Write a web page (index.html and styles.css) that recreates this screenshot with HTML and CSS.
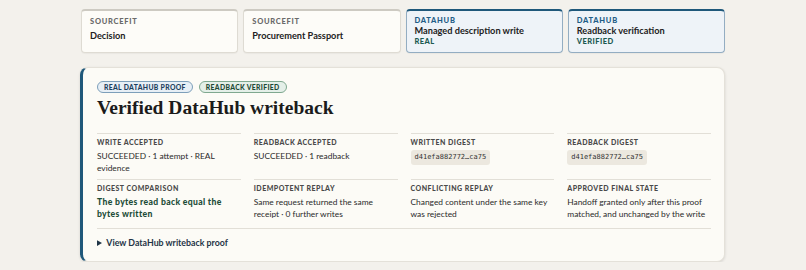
FILE: index.html
```html
<!DOCTYPE html>
<html lang="en">
<head>
    <meta charset="UTF-8">
    <meta name="viewport" content="width=device-width, initial-scale=1.0">
    <title>Verified DataHub writeback</title>
    <link rel="stylesheet" href="styles.css">
</head>
<body>
    <div class="container">
        <div class="steps">
            <div class="step">
                <div class="step-source">Sourcefit</div>
                <div class="step-title">Decision</div>
            </div>
            <div class="step">
                <div class="step-source">Sourcefit</div>
                <div class="step-title">Procurement Passport</div>
            </div>
            <div class="step datahub">
                <div class="step-source">DataHub</div>
                <div class="step-title">Managed description write</div>
                <div class="step-status">Real</div>
            </div>
            <div class="step datahub">
                <div class="step-source">DataHub</div>
                <div class="step-title">Readback verification</div>
                <div class="step-status">Verified</div>
            </div>
        </div>

        <div class="proof">
            <div class="badges">
                <span class="badge badge-blue">Real DataHub proof</span>
                <span class="badge badge-green">Readback verified</span>
            </div>
            <h1>Verified DataHub writeback</h1>
            <div class="facts">
                <div class="fact">
                    <div class="fact-label">Write accepted</div>
                    <div class="fact-value">SUCCEEDED · 1 attempt · REAL evidence</div>
                </div>
                <div class="fact">
                    <div class="fact-label">Readback accepted</div>
                    <div class="fact-value">SUCCEEDED · 1 readback</div>
                </div>
                <div class="fact">
                    <div class="fact-label">Written digest</div>
                    <div class="fact-value"><code class="digest">d41efa882772…ca75</code></div>
                </div>
                <div class="fact">
                    <div class="fact-label">Readback digest</div>
                    <div class="fact-value"><code class="digest">d41efa882772…ca75</code></div>
                </div>
                <div class="fact">
                    <div class="fact-label">Digest comparison</div>
                    <div class="fact-value match">The bytes read back equal the bytes written</div>
                </div>
                <div class="fact">
                    <div class="fact-label">Idempotent replay</div>
                    <div class="fact-value">Same request returned the same receipt · 0 further writes</div>
                </div>
                <div class="fact">
                    <div class="fact-label">Conflicting replay</div>
                    <div class="fact-value">Changed content under the same key was rejected</div>
                </div>
                <div class="fact">
                    <div class="fact-label">Approved final state</div>
                    <div class="fact-value">Handoff granted only after this proof matched, and unchanged by the write</div>
                </div>
            </div>
            <details class="more">
                <summary>View DataHub writeback proof</summary>
            </details>
        </div>
    </div>
</body>
</html>
```

FILE: styles.css
```css
body {
    margin: 0;
    padding: 0;
    background-color: #f3f1ec;
    font-family: Lato, "Noto Sans", sans-serif;
    color: #222;
}
.container {
    width: 645px;
    margin: 0 0 0 80px;
    padding-top: 9px;
}
.steps {
    display: grid;
    grid-template-columns: repeat(4, 1fr);
    gap: 5px;
    margin: 0 0 14px 1px;
}
.step {
    height: 44px;
    box-sizing: border-box;
    padding: 6px 8px 0;
    background-color: #fdfcf8;
    border: 1px solid #dedbd3;
    border-top: 2px solid #cdcac2;
    border-radius: 4px;
    box-shadow: 0 1px 1px rgba(0, 0, 0, 0.04);
}
.step.datahub {
    padding-top: 5px;
    background-color: #eef3f8;
    border-color: #93adc2;
    border-top: 2px solid #1f587a;
}
.step-source {
    font-size: 7.5px;
    line-height: 9px;
    font-weight: 900;
    letter-spacing: 0.1em;
    text-transform: uppercase;
    color: #6a6a6a;
}
.step.datahub .step-source {
    color: #1f5d86;
}
.step-title {
    margin-top: 4px;
    font-size: 9.2px;
    line-height: 11px;
    font-weight: 700;
    color: #222;
}
.step.datahub .step-title {
    margin-top: 0;
}
.step-status {
    margin-top: 1px;
    font-size: 7.5px;
    line-height: 9px;
    font-weight: 900;
    letter-spacing: 0.06em;
    text-transform: uppercase;
    color: #1c5a52;
}
.proof {
    background-color: #fcfbf6;
    border: 1px solid #e4e1d9;
    border-left: 3px solid #1f587a;
    border-radius: 8px;
    box-shadow: 0 1px 3px rgba(0, 0, 0, 0.12);
    padding: 13px 13px 12px 14px;
}
.badges {
    display: flex;
    gap: 6px;
}
.badge {
    font-size: 6.8px;
    font-weight: 900;
    letter-spacing: 0.05em;
    text-transform: uppercase;
    padding: 0 6px;
    border-radius: 7px;
    line-height: 10px;
}
.badge-blue {
    background-color: #e7eff6;
    border: 1px solid #7d9fba;
    color: #1d3f5e;
}
.badge-green {
    background-color: #e4efe8;
    border: 1px solid #7fa88f;
    color: #1d4a35;
}
h1 {
    font-family: "Liberation Serif", serif;
    font-size: 19.5px;
    font-weight: 700;
    color: #1b1b1b;
    margin: 4px 0 14px;
    line-height: 22px;
}
.facts {
    display: grid;
    grid-template-columns: repeat(4, 1fr);
    column-gap: 13px;
    border-bottom: 1px solid #e2dfd7;
    padding-bottom: 3px;
}
.fact {
    border-top: 1px solid #e2dfd7;
    padding: 4px 0 4.5px;
}
.fact-label {
    font-size: 7px;
    line-height: 9px;
    font-weight: 900;
    letter-spacing: 0.07em;
    text-transform: uppercase;
    color: #4a4a4a;
    margin-bottom: 2.5px;
}
.fact-value {
    font-size: 8.4px;
    line-height: 12.5px;
    color: #2a2a2a;
}
.fact-value.match {
    font-size: 8.6px;
    font-weight: 900;
    letter-spacing: 0.04em;
    color: #1d4d38;
}
.digest {
    display: inline-block;
    font-family: "DejaVu Sans Mono", monospace;
    font-size: 7px;
    line-height: 7px;
    background-color: #ece8df;
    border-radius: 3px;
    padding: 4px 4px;
    color: #333;
}
.more {
    margin-top: 7.5px;
}
.more summary {
    font-size: 8.8px;
    line-height: 12px;
    font-weight: 700;
    color: #1f3446;
    cursor: pointer;
}
```
